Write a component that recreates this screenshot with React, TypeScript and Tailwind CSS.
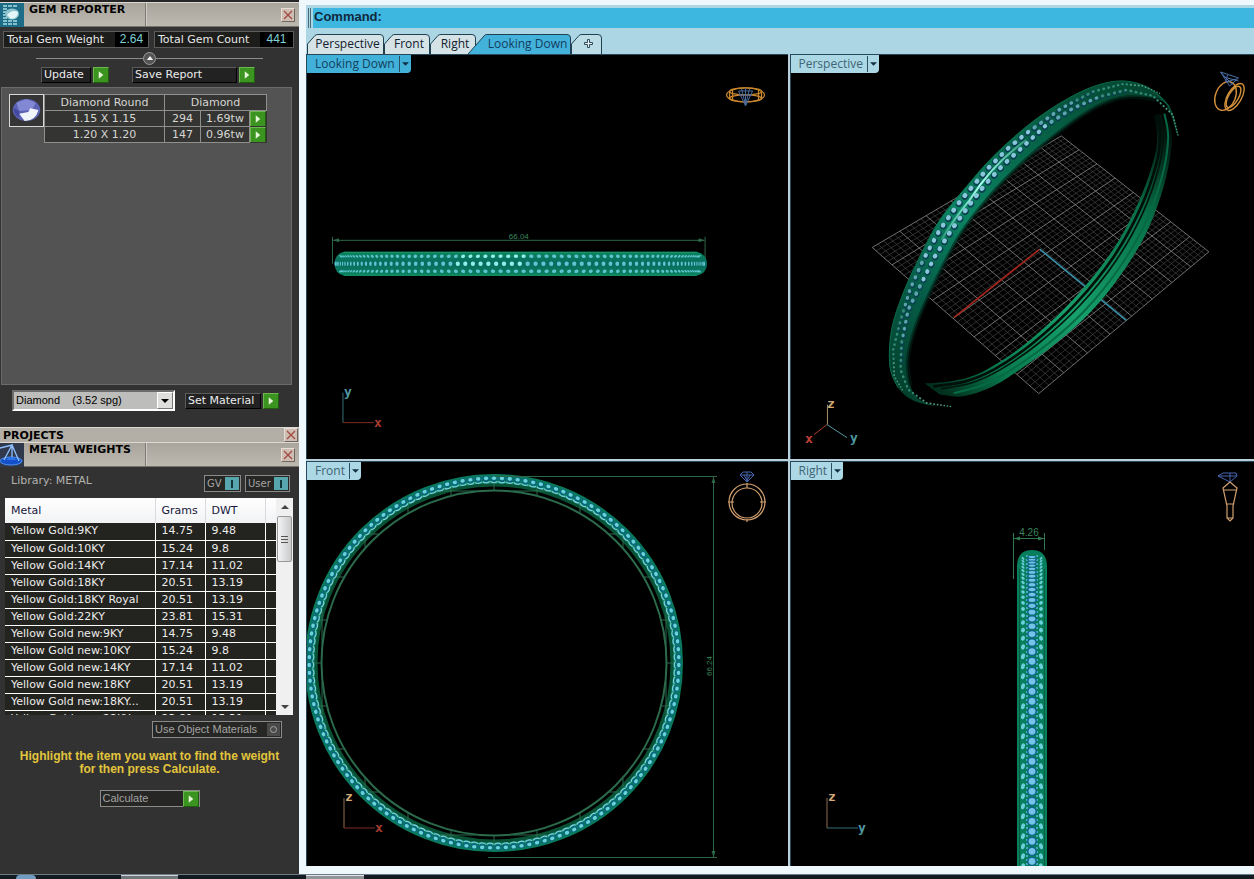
import type { ReactNode } from "react";

type Point = [number, number];

const metals = [
  ["Yellow Gold:9KY", "14.75", "9.48"],
  ["Yellow Gold:10KY", "15.24", "9.8"],
  ["Yellow Gold:14KY", "17.14", "11.02"],
  ["Yellow Gold:18KY", "20.51", "13.19"],
  ["Yellow Gold:18KY Royal", "20.51", "13.19"],
  ["Yellow Gold:22KY", "23.81", "15.31"],
  ["Yellow Gold new:9KY", "14.75", "9.48"],
  ["Yellow Gold new:10KY", "15.24", "9.8"],
  ["Yellow Gold new:14KY", "17.14", "11.02"],
  ["Yellow Gold new:18KY", "20.51", "13.19"],
  ["Yellow Gold new:18KY...", "20.51", "13.19"],
  ["Yellow Gold new:22KY", "23.81", "15.31"],
];

const STONES = 147;

const Play = () => (
  <span className="flex size-4 shrink-0 items-center justify-center border border-[#6fb552] border-r-[#1f5c10] border-b-[#1f5c10] bg-[#3c9420]">
    <svg viewBox="0 0 8 10" className="h-2 w-1.5">
      <path d="M1 0 L7 5 L1 10 Z" fill="#e6f6d8" />
    </svg>
  </span>
);

const CloseButton = ({ label }: { label: string }) => (
  <button
    aria-label={`Close ${label}`}
    className="flex size-[14px] items-center justify-center border border-[#e8ddd6] border-r-[#6f6660] border-b-[#6f6660] bg-[#cdbdb2]"
  >
    <svg viewBox="0 0 10 10" className="size-2.5">
      <path d="M1 1 L9 9 M9 1 L1 9" stroke="#a5473c" strokeWidth="1.2" />
    </svg>
  </button>
);

const GemIcon = () => (
  <svg viewBox="0 0 24 24" className="size-6 shrink-0">
    <rect width="24" height="24" fill="#1c6c88" />
    <g stroke="#a9dbe4" strokeWidth="1.4" strokeDasharray="4 1">
      <path d="M3 3h14M3 6h5M3 9h3M3 12h2M3 15h4M3 18h14M3 21h14" />
    </g>
    <ellipse cx="12" cy="11" rx="7" ry="5.5" fill="#8fc4cf" />
    <path d="M7 12 Q12 6 18 9 Q18 15 11 16 Z" fill="#e4f6f8" />
  </svg>
);

const ScaleIcon = () => (
  <svg viewBox="0 0 24 24" className="size-6 shrink-0">
    <rect width="24" height="24" fill="#30384c" />
    <ellipse cx="11" cy="18" rx="11" ry="4" fill="#1450c8" stroke="#4f94f4" />
    <path d="M0 5 L12 2 L4 17 M12 2 L19 18 M12 2 V16" fill="none" stroke="#8fc0ff" strokeWidth="1.3" />
    <path d="M6 17 Q11 11 17 17 Z" fill="#2f74ea" />
  </svg>
);

const PanelHeader = ({ title, icon }: { title: string; icon: ReactNode }) => (
  <div className="flex h-[25px] border-y border-t-[#dcd9d2] border-b-[#77746e] bg-linear-to-b from-[#a9a59c] to-[#bdb9b0]">
    {icon}
    <h2 className="w-[122px] border-r border-[#7d7a74] pl-[5px] text-[11px] leading-[13px] font-bold whitespace-nowrap text-black">
      {title}
    </h2>
    <div className="flex flex-1 items-center justify-end border-l border-[#d0cdc6] pr-1">
      <CloseButton label={title} />
    </div>
  </div>
);

const Total = ({ label, value }: { label: string; value: string }) => (
  <div className="flex h-[17px] items-center border border-[#5c5c5c] bg-[#1d1d1b] text-[11px] leading-[15px] text-[#e8e8e8]">
    <span className="px-[3px] whitespace-nowrap">{label}</span>
    <span className="ml-auto flex w-[33px] justify-center bg-black font-['Liberation_Sans',sans-serif] text-xs leading-[15px] text-[#7fd0d4]">
      {value}
    </span>
  </div>
);

const ActionButton = ({ label, className }: { label: string; className: string }) => (
  <button className="flex items-center gap-0.5 text-[11px] text-[#ececec]">
    <span
      className={`h-4 border border-[#5c5c5c] border-r-black border-b-black bg-[#222] pl-0.5 text-left leading-[14px] whitespace-nowrap ${className}`}
    >
      {label}
    </span>
    <Play />
  </button>
);

const Toggle = ({ label, className }: { label: string; className: string }) => (
  <button
    className={`flex h-[17px] items-center justify-between border border-[#8a8a88] bg-[#262624] px-px pl-0.5 text-[10px] text-[#a4a4a2] ${className}`}
  >
    {label}
    <span className="flex h-[13px] w-[14px] items-center justify-center bg-[#57a6ad]">
      <span className="h-2 w-0.5 bg-[#12363a]" />
    </span>
  </button>
);

const GemReporter = () => (
  <section>
    <PanelHeader title="GEM REPORTER" icon={<GemIcon />} />
    <div className="mt-1 flex gap-[5px] pl-[3px]">
      <div className="w-[146px]">
        <Total label="Total Gem Weight" value="2.64" />
      </div>
      <div className="w-[140px]">
        <Total label="Total Gem Count" value="441" />
      </div>
    </div>
    <div className="mt-[3px] flex h-[14px] items-center px-9">
      <div className="h-px flex-1 bg-[#8b8b89]" />
      <button aria-label="Collapse" className="flex size-[13px] items-center justify-center rounded-full border border-[#9c9c9a] bg-[#555]">
        <svg viewBox="0 0 8 5" className="h-1 w-2">
          <path d="M0 5 L4 0 L8 5 Z" fill="#eee" />
        </svg>
      </button>
      <div className="h-px flex-1 bg-[#8b8b89]" />
    </div>
    <div className="mt-0.5 flex gap-[23px] pl-[41px]">
      <ActionButton label="Update" className="w-[50px]" />
      <ActionButton label="Save Report" className="w-[105px]" />
    </div>
    <div className="mt-1 mr-[7px] ml-px flex h-[298px] items-start border border-[#6a6a6a] bg-[#535353] pt-1.5 pl-[7px]">
      <svg viewBox="0 0 36 33" className="h-[33px] w-[35px] border border-[#d8d8d4] bg-[#353535]">
        <ellipse cx="18" cy="16" rx="15" ry="12" fill="#5c62b4" />
        <path d="M7 8 L18 4 L28 8 L24 16 L10 17 Z" fill="#8288d4" />
        <path d="M10 20 L20 18 L22 14 L31 16 Q28 28 16 28 Z" fill="#f2f4fc" />
        <path d="M4 14 L10 17 L10 24 Q4 21 4 14" fill="#4348a0" />
      </svg>
      <table className="w-[222px] table-fixed border-collapse bg-[#343432] text-center text-[11px] leading-[15px] text-[#d6d6d2]">
        <colgroup>
          <col className="w-[120px]" />
          <col className="w-9" />
          <col className="w-[49px]" />
          <col className="w-[17px]" />
        </colgroup>
        <thead>
          <tr>
            <th className="border border-[#8f8f8d] p-0 font-normal">Diamond Round</th>
            <th colSpan={3} className="border border-[#8f8f8d] p-0 font-normal">
              Diamond
            </th>
          </tr>
        </thead>
        <tbody>
          {[
            ["1.15 X 1.15", "294", "1.69tw"],
            ["1.20 X 1.20", "147", "0.96tw"],
          ].map(([size, count, weight]) => (
            <tr key={size}>
              <td className="border border-[#8f8f8d] p-0">{size}</td>
              <td className="border border-[#8f8f8d] p-0">{count}</td>
              <td className="border border-[#8f8f8d] p-0">{weight}</td>
              <td className="p-0">
                <button aria-label={`Select ${size}`} className="block h-[15px] overflow-hidden">
                  <Play />
                </button>
              </td>
            </tr>
          ))}
        </tbody>
      </table>
    </div>
    <div className="flex items-center gap-2.5 pt-[5px] pl-3">
      <div className="relative w-[163px]">
        <select
          aria-label="Material"
          className="block h-[21px] w-full appearance-none border-2 border-[#6c6c6a] border-r-white border-b-white bg-[#bdbdbb] pl-0.5 font-['Liberation_Sans',sans-serif] text-[11px] text-black"
        >
          <option>Diamond{"\u00a0\u00a0\u00a0\u00a0"}(3.52 spg)</option>
        </select>
        <span className="pointer-events-none absolute top-0.5 right-0.5 flex h-[17px] w-4 items-center justify-center border border-white border-r-[#777] border-b-[#777] bg-[#dededc]">
          <svg viewBox="0 0 8 4" className="h-1 w-2">
            <path d="M0 0 H8 L4 4 Z" fill="#000" />
          </svg>
        </span>
      </div>
      <ActionButton label="Set Material" className="w-[76px]" />
    </div>
  </section>
);

const MetalWeights = () => (
  <section>
    <PanelHeader title="METAL WEIGHTS" icon={<ScaleIcon />} />
    <div className="mt-2 flex h-[17px] items-center gap-1 pr-[9px] pl-[11px]">
      <span className="mr-auto -mt-1 text-[11px] text-[#b2b2b0]">Library: METAL</span>
      <Toggle label="GV" className="w-[37px]" />
      <Toggle label="User" className="w-[45px]" />
    </div>
    <div className="mt-1.5 mr-1.5 ml-[5px] flex h-[217px] overflow-hidden bg-white">
      <div className="flex-1">
        <table className="w-full table-fixed border-collapse text-left text-[11px] leading-4">
          <colgroup>
            <col className="w-[150px]" />
            <col className="w-[50px]" />
            <col className="w-[60px]" />
            <col />
          </colgroup>
          <thead>
            <tr className="h-[25px] bg-linear-to-b from-white to-[#f1f2f4] text-[#16163a]">
              {["Metal", "Grams", "DWT", ""].map((head) => (
                <th key={head} className="border-r border-[#d8dade] p-0 pl-1.5 font-normal last:border-0">
                  {head}
                </th>
              ))}
            </tr>
          </thead>
          <tbody>
            {metals.map(([name, grams, dwt]) => (
              <tr key={name} className="h-[17px] border-b border-white bg-[#23231f] text-[#ececea]">
                <td className="border-r border-white p-0 pl-1.5 whitespace-nowrap">{name}</td>
                <td className="border-r border-white p-0 pl-1.5">{grams}</td>
                <td className="border-r border-white p-0 pl-1.5">{dwt}</td>
                <td />
              </tr>
            ))}
          </tbody>
        </table>
      </div>
      <div className="flex w-[17px] flex-col items-center bg-[#f0f0f0]">
        <svg viewBox="0 0 8 4" className="my-[7px] h-1 w-2 shrink-0">
          <path d="M0 4 L4 0 L8 4 Z" fill="#444" />
        </svg>
        <div className="flex h-[46px] w-[15px] flex-col items-center justify-center gap-0.5 rounded-xs border border-[#999] bg-linear-to-r from-[#f4f4f4] to-[#c9cacc]">
          <span className="h-px w-[7px] bg-[#555]" />
          <span className="h-px w-[7px] bg-[#555]" />
          <span className="h-px w-[7px] bg-[#555]" />
        </div>
        <svg viewBox="0 0 8 4" className="mt-auto mb-1.5 h-1 w-2 shrink-0">
          <path d="M0 0 H8 L4 4 Z" fill="#444" />
        </svg>
      </div>
    </div>
    <div className="flex justify-end pt-1.5 pr-[17px]">
      <button className="flex h-[17px] w-[130px] items-center justify-between border border-[#8a8a88] bg-[#262624] pr-px pl-0.5 text-[#a4a4a2]">
        <span className="font-['Liberation_Sans',sans-serif] text-[11px]">Use Object Materials</span>
        <span className="flex size-[13px] items-center justify-center bg-[#4a4a4a]">
          <span className="size-[7px] rounded-full border border-[#a4a4a2]" />
        </span>
      </button>
    </div>
    <p className="mt-3 text-center font-['Liberation_Sans',sans-serif] text-xs leading-[13px] font-bold text-[#e3c53c]">
      Highlight the item you want to find the weight
      <br />
      for then press Calculate.
    </p>
    <div className="mt-[14px] flex justify-center">
      <button className="flex h-[17px] w-[100px] items-center justify-between border border-[#8a8a88] bg-[#262624] pl-0.5 text-[#a4a4a2]">
        <span className="font-['Liberation_Sans',sans-serif] text-[11px]">Calculate</span>
        <Play />
      </button>
    </div>
  </section>
);

const tabs = [
  { name: "Perspective", width: 77 },
  { name: "Front", width: 46 },
  { name: "Right", width: 46 },
];

const ViewTabs = () => (
  <nav className="flex h-[22px] items-end bg-[#acd6e3] pl-px font-['Open_Sans',sans-serif] text-xs text-[#12202c]">
    {tabs.map(({ name, width }) => (
      <button key={name} className={`relative h-5 ${width === 77 ? "w-[77px]" : "w-[46px]"}`}>
        <svg viewBox={`0 0 ${width} 20`} className="absolute inset-0 size-full">
          <path
            d={`M0.5 20 V10 L8 1.5 Q9 0.5 11 0.5 H${width - 4} Q${width - 0.5} 0.5 ${width - 0.5} 4 V20`}
            fill="#d5e3e7"
            stroke="#1f4152"
          />
        </svg>
        <span className="relative pl-1">{name}</span>
      </button>
    ))}
    <button className="relative -ml-2 h-5 w-[103px]">
      <svg viewBox="0 0 103 20" className="absolute inset-0 size-full">
        <path d="M0 20 L16 2 Q17 0.5 19 0.5 H99 Q102.5 0.5 102.5 4 V20" fill="#43b2db" stroke="#1f4152" />
      </svg>
      <span className="relative pl-4 text-[#143c60]">Looking Down</span>
    </button>
    <button aria-label="New viewport" className="relative h-5 w-[31px]">
      <svg viewBox="0 0 31 20" className="absolute inset-0 size-full">
        <path d="M0.5 20 V10 L8 1.5 Q9 0.5 11 0.5 H27 Q30.5 0.5 30.5 4 V20" fill="#bcdde6" stroke="#1f4152" />
        <path d="M16.5 5.5h2v3h3v2h-3v3h-2v-3h-3v-2h3z" fill="#e8f2f4" stroke="#2f4a58" />
      </svg>
    </button>
  </nav>
);

const Viewport = ({ name, active, box, children }: { name: string; active?: boolean; box: string; children: ReactNode }) => (
  <div className="relative overflow-hidden border-t border-l border-[#27485a] bg-black">
    <svg viewBox={box} preserveAspectRatio="xMinYMin slice" className="absolute inset-0 size-full">
      {children}
    </svg>
    <button
      className={`relative flex h-[18px] items-center rounded-br-sm pl-2 font-['Open_Sans',sans-serif] text-xs ${
        active ? "bg-[#42b1d9] text-[#12405e]" : "bg-[#acd8e5] text-[#3f6474]"
      }`}
    >
      {name}
      <span className="ml-1 flex h-4 items-center border-l border-[#2b4f60] px-0.5">
        <svg viewBox="0 0 8 4" className="h-1 w-[7px]">
          <path d="M0 0 H8 L4 4 Z" fill="#123044" />
        </svg>
      </span>
    </button>
  </div>
);

const Axis = ({ x, y, up, across }: { x: number; y: number; up: "y" | "z"; across: "x" | "y" }) => (
  <g fontFamily="DejaVu Sans Mono, monospace" fontSize="13" fontWeight="bold">
    <path d={`M${x} ${y} V${y - 30}`} stroke={up === "y" ? "#356f78" : "#8f6a4c"} />
    <path d={`M${x} ${y} H${x + 31}`} stroke={across === "x" ? "#7c2a20" : "#356f78"} />
    <text x={x + 1} y={y - 27} fill={up === "y" ? "#4f9aa4" : "#d3ab78"}>
      {up}
    </text>
    <text x={x + 31} y={y + 4} fill={across === "x" ? "#a83c30" : "#4f9aa4"}>
      {across}
    </text>
  </g>
);

const TopView = () => {
  const dots = [];
  for (let i = 0; i < 73; i++) {
    const a = ((i - 36) * 2 * Math.PI) / STONES;
    const x = 214 + 185 * Math.sin(a);
    const w = Math.max(0.5, 2.2 * Math.cos(a));
    const b = a + Math.PI / STONES;
    const x2 = 214 + 180 * Math.sin(b);
    const slant = Math.sin(b) * 55;
    const bright = Math.abs(x - 180) < 35 ? "#8ff0ea" : "#5fc4d0";
    dots.push(
      <ellipse key={i} cx={x} cy="209" rx={w} ry="2.2" fill={bright} />,
      <ellipse key={`t${i}`} cx={x2} cy="201.5" rx={w} ry="1.7" fill={bright} transform={`rotate(${slant} ${x2} 201.5)`} />,
      <ellipse key={`b${i}`} cx={x2} cy="216.5" rx={w} ry="1.7" fill="#5fc4d0" transform={`rotate(${-slant} ${x2} 216.5)`} />
    );
  }
  return (
    <>
      <g stroke="#2c6848">
        <path d="M26.5 182 V209 M399.5 182 V209 M26 185.5 H399" />
        <path d="M27 185.5 l6 -2 v4 z M399 185.5 l-6 -2 v4 z" fill="#2c6848" stroke="none" />
      </g>
      <text x="213" y="184" textAnchor="middle" fontSize="8" fill="#39845c" fontFamily="Liberation Sans, sans-serif">
        66.04
      </text>
      <path d="M38 197 H391 Q401 199 401.5 209 Q401 219 391 221 H38 Q29 219 28.5 209 Q29 199 38 197 Z" fill="url(#band)" />
      <path d="M38 197.5 H391 M38 220.5 H391" stroke="#1f9468" />
      {dots}
      <g fill="none" stroke="#c8862c" strokeWidth="1.3">
        <ellipse cx="440" cy="40" rx="19" ry="7" />
        <ellipse cx="440" cy="36.5" rx="16" ry="3.5" />
        <ellipse cx="440" cy="43.5" rx="16" ry="3.5" />
        <path d="M424 36 V44 M427 35 V45 M453 35 V45 M456 36 V44" />
      </g>
      <path d="M433 36 H447 L440 51 Z M436 34 L440 50 L444 34 M433 40 H447 M440 33 V50" fill="none" stroke="#48699c" />
      <Axis x={37} y={368} up="y" across="x" />
      <defs>
        <linearGradient id="band" x1="0" x2="0" y1="0" y2="1">
          <stop offset="0" stopColor="#08855c" />
          <stop offset="0.5" stopColor="#086a60" />
          <stop offset="1" stopColor="#08855c" />
        </linearGradient>
      </defs>
    </>
  );
};

// Construction plane corners: left, top, right, bottom
const [p0, p1, p2, p3]: Point[] = [
  [37, 563],
  [605, 228],
  [1048, 576],
  [537, 1002],
];

// unit square -> quad
const project = (u: number, v: number): Point => {
  const sx = p0[0] - p1[0] + p2[0] - p3[0];
  const sy = p0[1] - p1[1] + p2[1] - p3[1];
  const dx1 = p1[0] - p2[0];
  const dy1 = p1[1] - p2[1];
  const dx2 = p3[0] - p2[0];
  const dy2 = p3[1] - p2[1];
  const det = dx1 * dy2 - dx2 * dy1;
  const g = (sx * dy2 - dx2 * sy) / det;
  const h = (dx1 * sy - sx * dy1) / det;
  const w = g * u + h * v + 1;
  return [
    ((p1[0] - p0[0] + g * p1[0]) * u + (p3[0] - p0[0] + h * p3[0]) * v + p0[0]) / w,
    ((p1[1] - p0[1] + g * p1[1]) * u + (p3[1] - p0[1] + h * p3[1]) * v + p0[1]) / w,
  ];
};

// Catmull-Rom through the points
const curve = (pts: Point[], start = "M") => {
  let d = `${start}${pts[0][0]} ${pts[0][1]}`;
  for (let i = 0; i < pts.length - 1; i++) {
    const a = pts[i - 1] ?? pts[i];
    const b = pts[i];
    const c = pts[i + 1];
    const e = pts[i + 2] ?? c;
    d += ` C${b[0] + (c[0] - a[0]) / 6} ${b[1] + (c[1] - a[1]) / 6} ${c[0] - (e[0] - b[0]) / 6} ${c[1] - (e[1] - b[1]) / 6} ${c[0]} ${c[1]}`;
  }
  return d;
};

const outerRim: Point[] = [[955, 225], [930, 140], [870, 85], [790, 63], [700, 80], [600, 130], [500, 200], [400, 290], [320, 380], [240, 480], [180, 590], [130, 700], [95, 810], [90, 920], [115, 985], [165, 1025], [240, 1042]];
const innerRim: Point[] = [[952, 222], [930, 155], [900, 120], [800, 112], [710, 142], [605, 212], [490, 308], [390, 410], [302, 525], [232, 655], [170, 795], [144, 900], [152, 980], [182, 1022], [240, 1042]];
const rowA: Point[] = [[900, 100], [850, 78], [790, 72], [700, 95], [605, 145], [500, 220], [445, 265], [380, 330], [300, 425], [240, 510], [190, 600], [150, 690], [120, 790], [100, 870], [103, 950], [130, 995]];
const rowB: Point[] = [[955, 225], [940, 165], [880, 108], [800, 90], [720, 110], [640, 145], [560, 195], [490, 260], [430, 315], [375, 375], [325, 440], [275, 510], [225, 590], [180, 680], [145, 750], [125, 850], [122, 930], [145, 990], [200, 1030], [280, 1042]];
const farInner: Point[] = [[883, 165], [892, 220], [885, 290], [840, 420], [760, 570], [640, 720], [500, 850], [380, 930], [290, 962], [195, 972]];
const farOuter: Point[] = [[925, 160], [937, 240], [915, 370], [860, 520], [780, 650], [690, 760], [590, 850], [480, 930], [400, 980], [310, 1010], [240, 1005]];

// spots along a polyline, smaller and tighter toward its ends
const walk = (pts: Point[], gap: number) => {
  const spots: { x: number; y: number; angle: number; size: number }[] = [];
  const lengths = pts.slice(1).map((p, i) => Math.hypot(p[0] - pts[i][0], p[1] - pts[i][1]));
  const total = lengths.reduce((sum, l) => sum + l, 0);
  let at = 0;
  while (at < total) {
    let i = 0;
    let rest = at;
    while (i < lengths.length - 1 && rest > lengths[i]) rest -= lengths[i++];
    const t = rest / lengths[i];
    const dx = pts[i + 1][0] - pts[i][0];
    const dy = pts[i + 1][1] - pts[i][1];
    const size = 0.3 + 0.7 * Math.sin((Math.PI * at) / total);
    spots.push({ x: pts[i][0] + dx * t, y: pts[i][1] + dy * t, angle: (Math.atan2(dy, dx) * 180) / Math.PI, size });
    at += gap * size;
  }
  return spots;
};

const stoneColor = (size: number) => {
  if (size > 0.88) return "#86c8da";
  if (size > 0.7) return "#5aa6ac";
  return size > 0.45 ? "#348a76" : "#4d9a84";
};

const between = (a: Point[], b: Point[], t: number) =>
  Array.from({ length: 10 }, (_, i): Point => [a[i][0] + (b[i][0] - a[i][0]) * t, a[i][1] + (b[i][1] - a[i][1]) * t]);

const PerspectiveView = () => {
  const minor = [];
  const major = [];
  for (let i = 0; i <= 40; i++) {
    const t = i / 40;
    const d = `M${project(t, 0)} L${project(t, 1)} M${project(0, t)} L${project(1, t)}`;
    (i % 5 ? minor : major).push(d);
  }
  return (
    <>
      <defs>
        <linearGradient id="near" gradientUnits="userSpaceOnUse" x1="900" y1="100" x2="120" y2="1000">
          <stop offset="0" stopColor="#04452f" />
          <stop offset="0.35" stopColor="#07694c" />
          <stop offset="0.55" stopColor="#0b8462" />
          <stop offset="0.75" stopColor="#06604a" />
          <stop offset="1" stopColor="#03402c" />
        </linearGradient>
        <linearGradient id="far" gradientUnits="userSpaceOnUse" x1="900" y1="160" x2="250" y2="1000">
          <stop offset="0" stopColor="#000604" />
          <stop offset="0.25" stopColor="#087048" />
          <stop offset="0.6" stopColor="#16a06c" />
          <stop offset="0.85" stopColor="#087a4e" />
          <stop offset="1" stopColor="#02301e" />
        </linearGradient>
        <linearGradient id="shine" gradientUnits="userSpaceOnUse" x1="560" y1="180" x2="200" y2="600">
          <stop offset="0" stopColor="#7ff5d8" stopOpacity="0" />
          <stop offset="0.5" stopColor="#a8fff0" />
          <stop offset="1" stopColor="#7ff5d8" stopOpacity="0" />
        </linearGradient>
      </defs>
      <g transform="translate(70 5) scale(0.3333)" fill="none">
        <path d={minor.join(" ")} stroke="#454545" strokeWidth="2" />
        <path d={major.join(" ")} stroke="#858585" strokeWidth="2.5" />
        <path d="M540 568 L283 773" stroke="#a3261c" strokeWidth="5" />
        <path d="M540 568 L800 782" stroke="#3a8fa8" strokeWidth="5" />

        <path d={`${curve(farOuter)} ${curve([...farInner].reverse(), "L")} Z`} fill="url(#far)" />
        <path d={curve(between(farInner, farOuter, 0.22))} stroke="#010f0a" strokeWidth="8" />
        <path d={curve(between(farInner, farOuter, 0.42))} stroke="#02140d" strokeWidth="5" />
        <path d={curve(between(farInner, farOuter, 0.75))} stroke="#066b45" strokeWidth="6" />

        <path d={`${curve(outerRim)} ${curve([...innerRim].reverse(), "L")} Z`} fill="url(#near)" />
        <path d={curve(innerRim.slice(2, 13))} stroke="#011d14" strokeWidth="12" strokeOpacity="0.6" />
        <path d={curve(outerRim.slice(1, 15))} stroke="#0a6b4a" strokeWidth="3" />
        {[rowA, rowB].map((row, r) =>
          walk(row, 28).map(({ x, y, angle, size }, i) => (
            <g key={`${r}-${i}`} transform={`rotate(${angle} ${x} ${y})`}>
              {size > 0.6 && <ellipse cx={x + 2} cy={y - 2} rx={11 * size} ry={10 * size} fill="#0a3f50" />}
              <ellipse cx={x} cy={y} rx={8 * size} ry={7 * size} fill={stoneColor(size)} />
            </g>
          ))
        )}
        <path d="M500 240 Q400 310 330 420 Q280 480 245 540" stroke="url(#shine)" strokeWidth="6" />
      </g>
      <g fill="none" stroke="#d2913c" strokeWidth="1.4">
        <ellipse cx="436" cy="41" rx="10" ry="15" transform="rotate(22 436 41)" />
        <ellipse cx="445" cy="42" rx="7" ry="15" transform="rotate(30 445 42)" />
        <ellipse cx="444" cy="42" rx="5" ry="12" transform="rotate(30 444 42)" />
      </g>
      <path d="M431 17 L449 23 L440 31 Z M434 22 L449 26 M431 17 L443 30 M438 20 L436 27 L447 24" fill="none" stroke="#4a70a8" />
      <g fontFamily="DejaVu Sans Mono, monospace" fontSize="13" fontWeight="bold">
        <path d="M37.5 370 V350" stroke="#a8906c" />
        <path d="M37 370 L24 380" stroke="#a83c30" />
        <path d="M37 370 L57 383" stroke="#4f9aa4" />
        <text x="37" y="353" fill="#d3ab78">z</text>
        <text x="15" y="388" fill="#c04034">x</text>
        <text x="60" y="387" fill="#4f9aa4">y</text>
      </g>
    </>
  );
};

const FrontView = () => {
  const ticks = [];
  for (let i = -4; i <= 4; i++) {
    const o = i * 43;
    const a = Math.sqrt(173 * 173 - o * o);
    const b = Math.sqrt(180 * 180 - o * o);
    ticks.push(`M${187 + o} ${202 - a} V${202 - b} M${187 + o} ${202 + a} V${202 + b}`);
    ticks.push(`M${187 - a} ${202 + o} H${187 - b} M${187 + a} ${202 + o} H${187 + b}`);
  }
  return (
    <>
      <g fill="none">
        <circle cx="187" cy="202" r="184" stroke="#0a7a5c" strokeWidth="10" />
        <circle cx="187" cy="202" r="178" stroke="#0a5236" strokeWidth="3" />
        <circle cx="187" cy="202" r="172.5" stroke="#2b6b4c" strokeWidth="2" />
        <path d={ticks.join(" ")} stroke="#2b6b4c" />
      </g>
      {Array.from({ length: STONES }, (_, i) => (
        <g key={i} transform={`rotate(${(i * 360) / STONES} 187 202)`}>
          <path d="M183.5 20.5 Q187 23 190.5 20.5" fill="none" stroke="#7cd0e0" strokeWidth="1.2" />
          <ellipse cx="187" cy="17.5" rx="3.4" ry="2.8" fill="#0c6484" />
          <ellipse cx="187" cy="17.2" rx="2.2" ry="1.8" fill="#68d4d4" />
        </g>
      ))}
      <g stroke="#2c6848" fill="none">
        <path d="M188 15.5 H410 M181 396.5 H410 M406.5 15 V396" />
        <path d="M406.5 16 l-2 6 h4 z M406.5 396 l-2 -6 h4 z" fill="#2c6848" stroke="none" />
      </g>
      <text transform="translate(405 205) rotate(-90)" textAnchor="middle" fontSize="8" fill="#39845c" fontFamily="Liberation Sans, sans-serif">
        66.24
      </text>
      <g fill="none" stroke="#d2a070" strokeWidth="1.2">
        <circle cx="440" cy="41" r="18" />
        <circle cx="440" cy="42" r="15" />
        <path d="M440 22 V27 M440 58 V61 M421 41 h6 M453 41 h6" />
      </g>
      <path d="M436 11 H444 L447 14 L440 21 L433 14 Z M433 14 H447 M440 11 V20 M437 14 L440 20 L443 14" fill="none" stroke="#4668b0" />
      <Axis x={37} y={367} up="z" across="x" />
    </>
  );
};

const RightView = () => {
  const rows: { y: number; step: number }[] = [];
  let y = 96;
  while (y < 412) {
    const step = Math.min(10, 2.5 + (y - 94) * 0.075);
    rows.push({ y, step });
    y += step;
  }
  return (
    <>
      <path d="M227 410 V104 Q228 89 242 89 Q256 89 257 104 V410 Z" fill="#087f5c" />
      <path d="M229.5 410 V108 M254.5 410 V108" stroke="#0a5c42" />
      <path d="M237 94 V410 M247 94 V410" stroke="#4aa6c4" strokeWidth="2" strokeDasharray="2 2" />
      {rows.map(({ y, step }) => {
        const s = step / 10;
        const side = y + step / 2;
        return (
          <g key={y}>
            <ellipse cx="242" cy={y} rx="5" ry={4.6 * s} fill="#10648c" />
            <ellipse cx="242" cy={y} rx="3.4" ry={3.4 * s} fill="#74c4ea" />
            <ellipse cx="233" cy={side} rx="1.9" ry={3 * s} fill="#6cd0dc" transform={`rotate(${40 * (1.4 - s)} 233 ${side})`} />
            <ellipse cx="251" cy={side} rx="1.9" ry={3 * s} fill="#6cd0dc" transform={`rotate(${-40 * (1.4 - s)} 251 ${side})`} />
          </g>
        );
      })}
      <g stroke="#2f7850">
        <path d="M223.5 72 V118 M254.5 72 V89 M224 77.5 H254" />
        <path d="M224 77.5 l6 -2 v4 z M254 77.5 l-6 -2 v4 z" fill="#2f7850" stroke="none" />
      </g>
      <text x="239" y="75" textAnchor="middle" fontSize="10" fill="#39845c" fontFamily="Liberation Sans, sans-serif">
        4.26
      </text>
      <path d="M428 15 L433 12 H446 L447 15 L440 21 Z M428 15 H447 M440 12 V20" fill="none" stroke="#4668b0" />
      <path d="M440 21 L433 27 L437 45 V57 L440 60 L443 57 V45 L447 27 Z M434 29 H446 M436 43 H444 M437 57 H443" fill="none" stroke="#d2a070" strokeWidth="1.2" />
      <Axis x={37} y={367} up="z" across="y" />
    </>
  );
};

export default function App() {
  return (
    <div className="flex h-screen flex-col overflow-hidden bg-[#eef7fb]">
      <div className="flex min-h-0 flex-1">
        <aside className="w-[299px] shrink-0 overflow-hidden border-t-2 border-[#262626] bg-[#323232] font-['DejaVu_Sans',sans-serif]">
          <GemReporter />
          <div className="mt-4 flex h-[15px] items-center justify-between border-t border-[#dcd9d2] bg-[#b3afa6] pr-px pl-[3px]">
            <h2 className="text-[11px] leading-[13px] font-bold text-black">PROJECTS</h2>
            <CloseButton label="PROJECTS" />
          </div>
          <MetalWeights />
        </aside>
        <main className="flex min-w-0 flex-1 flex-col pt-[5px] pb-2 pl-[7px]">
          <div className="flex h-[27px] bg-[#acd6e3] pt-[3px] pb-1 pl-0.5">
            <span className="mr-0.5 w-[3px] border-x border-[#4a6a78]" />
            <label htmlFor="command" className="bg-[#3db6e0] pl-px font-['Liberation_Sans',sans-serif] text-[13px] leading-[17px] font-bold text-[#10283c]">
              Command:
            </label>
            <input id="command" className="min-w-0 flex-1 bg-[#3db6e0] pl-1 font-['Liberation_Sans',sans-serif] text-[13px] outline-none" />
          </div>
          <ViewTabs />
          <div className="grid min-h-0 flex-1 grid-cols-[481fr_464fr] grid-rows-2 gap-0.5 bg-[#b9cfda]">
            <Viewport name="Looking Down" active box="1 0 481 405">
              <TopView />
            </Viewport>
            <Viewport name="Perspective" box="1 0 464 405">
              <PerspectiveView />
            </Viewport>
            <Viewport name="Front" box="0 1 481 404">
              <FrontView />
            </Viewport>
            <Viewport name="Right" box="1 1 464 404">
              <RightView />
            </Viewport>
          </div>
        </main>
      </div>
      <footer className="flex h-[5px] border-t border-[#6c7c86] bg-[#141a22]">
        <span className="ml-4 h-full w-5 rounded-t-full bg-[#6f9cc0]" />
        <span className="ml-[85px] h-full w-[57px] border-t border-[#cfd3d6] bg-[#70777c]" />
        <span className="ml-32 h-full w-[58px] border-t border-[#e2e5e8] bg-[#8f9599]" />
      </footer>
    </div>
  );
}
